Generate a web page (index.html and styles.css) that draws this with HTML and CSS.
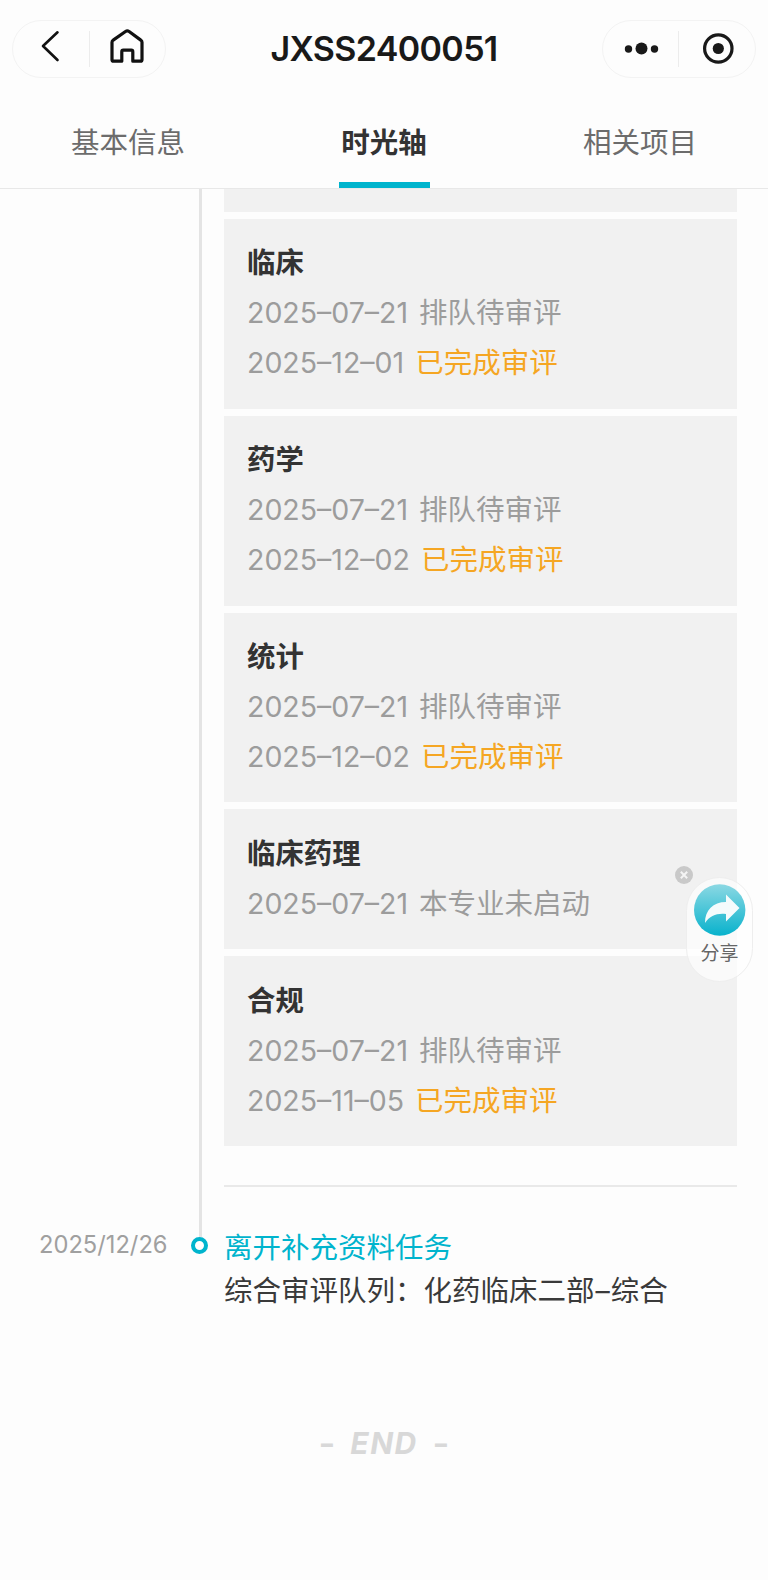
FILE: index.html
```html
<!DOCTYPE html>
<html lang="zh-CN">
<head>
    <meta charset="UTF-8">
    <meta name="viewport" content="width=device-width, initial-scale=1.0">
    <title>JXSS2400051</title>
    <link rel="stylesheet" href="styles.css">
</head>
<body>
    <header class="navbar">
        <div class="capsule">
            <button class="capsule-btn" aria-label="返回">
                <svg width="40" height="40" viewBox="0 0 40 40">
                    <path d="M26.500 3.300 12 17l14.500 14" fill="none" stroke="#111" stroke-width="2.600" stroke-linecap="round" stroke-linejoin="round"/>
                </svg>
            </button>
            <button class="capsule-btn" aria-label="首页">
                <svg width="40" height="40" viewBox="0 0 40 40">
                    <path transform="translate(-.5 -.8)" d="M5.500 31.500V14a2.500 2.500 0 0 1 1.200-2.100L19 3.300a3.200 3.200 0 0 1 3.600 0L34.300 11.900a2.500 2.500 0 0 1 1.200 2.100V31.500a1.500 1.500 0 0 1-1.500 1.500h-7.700V23.500a1.500 1.500 0 0 0-1.500-1.500h-8a1.500 1.500 0 0 0-1.500 1.500V33H7a1.500 1.500 0 0 1-1.500-1.500z" fill="none" stroke="#111" stroke-width="3.200" stroke-linejoin="round"/>
                </svg>
            </button>
        </div>
        <h1 class="title">JXSS2400051</h1>
        <div class="capsule">
            <button class="capsule-btn" aria-label="更多">
                <svg width="40" height="40" viewBox="0 0 40 40">
                    <circle cx="7.500" cy="20" r="3.700" fill="#191919"/>
                    <circle cx="20.500" cy="19.500" r="6" fill="#191919"/>
                    <circle cx="33.500" cy="20" r="3.700" fill="#191919"/>
                </svg>
            </button>
            <button class="capsule-btn" aria-label="关闭">
                <svg width="40" height="40" viewBox="0 0 40 40">
                    <circle cx="21.300" cy="19.500" r="13.700" fill="none" stroke="#191919" stroke-width="3.200"/>
                    <circle cx="21.300" cy="19.500" r="5.600" fill="#191919"/>
                </svg>
            </button>
        </div>
    </header>

    <nav class="tabs">
        <a class="tab">基本信息</a>
        <a class="tab active">时光轴</a>
        <a class="tab">相关项目</a>
    </nav>

    <main class="timeline">
        <section class="entry">
            <div class="date"></div>
            <div class="rail"></div>
            <div class="cards">
                <div class="card card-cut"></div>
                <div class="card">
                    <h3>临床</h3>
                    <p>2025–07–21 排队待审评</p>
                    <p>2025–12–01 <span class="done">已完成审评</span></p>
                </div>
                <div class="card">
                    <h3>药学</h3>
                    <p>2025–07–21 排队待审评</p>
                    <p>2025–12–02 <span class="done">已完成审评</span></p>
                </div>
                <div class="card">
                    <h3>统计</h3>
                    <p>2025–07–21 排队待审评</p>
                    <p>2025–12–02 <span class="done">已完成审评</span></p>
                </div>
                <div class="card">
                    <h3>临床药理</h3>
                    <p>2025–07–21 本专业未启动</p>
                </div>
                <div class="card">
                    <h3>合规</h3>
                    <p>2025–07–21 排队待审评</p>
                    <p>2025–11–05 <span class="done">已完成审评</span></p>
                </div>
            </div>
        </section>

        <section class="entry">
            <div class="date">2025/12/26</div>
            <div class="rail rail-end"><span class="dot"></span></div>
            <div class="event">
                <h2>离开补充资料任务</h2>
                <p>综合审评队列：化药临床二部<span class="dash">–</span>综合</p>
            </div>
        </section>
    </main>

    <footer class="end"><span>-</span><em>END</em><span>-</span></footer>

    <!-- floating share button -->
    <div class="share">
        <svg class="share-close" width="18" height="18" viewBox="0 0 18 18">
            <circle cx="9" cy="9" r="9" fill="#c9c9c9"/>
            <path d="M5.800 5.800l6.400 6.400M12.200 5.800l-6.400 6.400" stroke="#f4f4f4" stroke-width="2"/>
        </svg>
        <svg width="52" height="52" viewBox="0 0 52 52">
            <defs>
                <linearGradient id="shareBg" x1="0" y1="0" x2="0" y2="1">
                    <stop offset="0" stop-color="#8bd8e3"/>
                    <stop offset="1" stop-color="#08b2cc"/>
                </linearGradient>
            </defs>
            <circle cx="25.700" cy="26" r="25.700" fill="url(#shareBg)"/>
            <path d="M32 10.500 45.500 24 32 37.500V30c-9-1-16 1.500-21 9C11 26 19 18 32 18z" fill="#f4fbfc"/>
        </svg>
        <span class="share-text">分享</span>
    </div>
</body>
</html>
```

FILE: styles.css
```css
* {
    box-sizing: border-box;
    margin: 0;
    padding: 0;
}
body {
    width: 768px;
    height: 1580px;
    overflow: hidden;
    background: #fdfdfd;
    color: #3a3a3a;
    font-family: Inter, "Noto Sans CJK SC", sans-serif;
    font-size: 28.5px;
}
.navbar {
    display: flex;
    justify-content: space-between;
    align-items: center;
    height: 97px;
    padding: 0 12px;
}
.capsule {
    display: flex;
    align-items: center;
    width: 154px;
    height: 58px;
    border: 1px solid #f3f3f3;
    border-radius: 29px;
}
.capsule-btn {
    display: flex;
    flex: 1;
    justify-content: center;
    align-items: center;
    height: 36px;
    border: none;
    background: none;
}
.capsule-btn + .capsule-btn {
    border-left: 1px solid #ececec;
}
.title {
    font-size: 34px;
    font-weight: 600;
    letter-spacing: -0.65px;
    color: #191919;
}
.tabs {
    display: flex;
    height: 92px;
    border-bottom: 1px solid #e8e8e8;
}
.tab {
    display: flex;
    flex: 1;
    flex-direction: column;
    align-items: center;
    padding-top: 21px;
    line-height: 50px;
    color: #6c6c6c;
}
.active {
    font-weight: 600;
    color: #333;
}
.active::after {
    content: "";
    width: 91px;
    height: 6px;
    margin-top: 14px;
    background: #00b4cd;
}
.entry {
    display: flex;
}
.date {
    width: 191px;
    padding-left: 39px;
    font-size: 23.7px;
    line-height: 34px;
    color: #a0a0a0;
}
.rail {
    width: 33px;
    padding-left: 8px;
}
.rail::before {
    content: "";
    display: block;
    width: 3px;
    height: 100%;
    background: #e4e4e4;
}
.rail-end {
    padding-left: 0;
}
.rail-end::before {
    height: 9px;
    margin-left: 8px;
}
.dot {
    display: block;
    width: 17px;
    height: 17px;
    border: 4px solid #00b4cd;
    border-radius: 50%;
    background: #fff;
}
.cards {
    display: flex;
    flex-direction: column;
    gap: 7px;
    width: 513px;
    padding-bottom: 39px;
    border-bottom: 2px solid #e9e9e9;
    margin-bottom: 41px;
}
.card {
    padding: 19.4px 23px 20.4px;
    background: #f1f1f1;
    line-height: 50px;
    color: #9c9c9c;
    word-spacing: 3px;
}
.card-cut {
    height: 23px;
    padding: 0;
}
.card h3 {
    font-size: 28.4px;
    font-weight: 600;
    color: #333;
}
.done {
    color: #f5a623;
}
.event {
    margin-top: -2px;
}
.event h2 {
    font-size: 28.5px;
    font-weight: 400;
    line-height: 43px;
    color: #00b4cd;
}
.event p {
    line-height: 43px;
}
.dash {
    margin: 0 1px;
}
.end {
    display: flex;
    justify-content: center;
    gap: 16px;
    margin-top: 109px;
    font-size: 30px;
    font-weight: 700;
    line-height: 44px;
    color: #d8d8d8;
}
.end em {
    letter-spacing: 1.5px;
}
.end span {
    transform: scaleX(1.2);
}
.share {
    position: absolute;
    top: 877px;
    left: 686px;
    display: flex;
    flex-direction: column;
    align-items: center;
    width: 67px;
    height: 105px;
    padding-top: 6px;
    border: 1px solid #eee;
    border-radius: 34px;
    background: rgba(255, 255, 255, 0.65);
}
.share-close {
    position: absolute;
    top: -12px;
    left: -12px;
}
.share-text {
    margin-top: 4px;
    font-size: 19px;
    line-height: 28px;
    color: #666;
}
```
